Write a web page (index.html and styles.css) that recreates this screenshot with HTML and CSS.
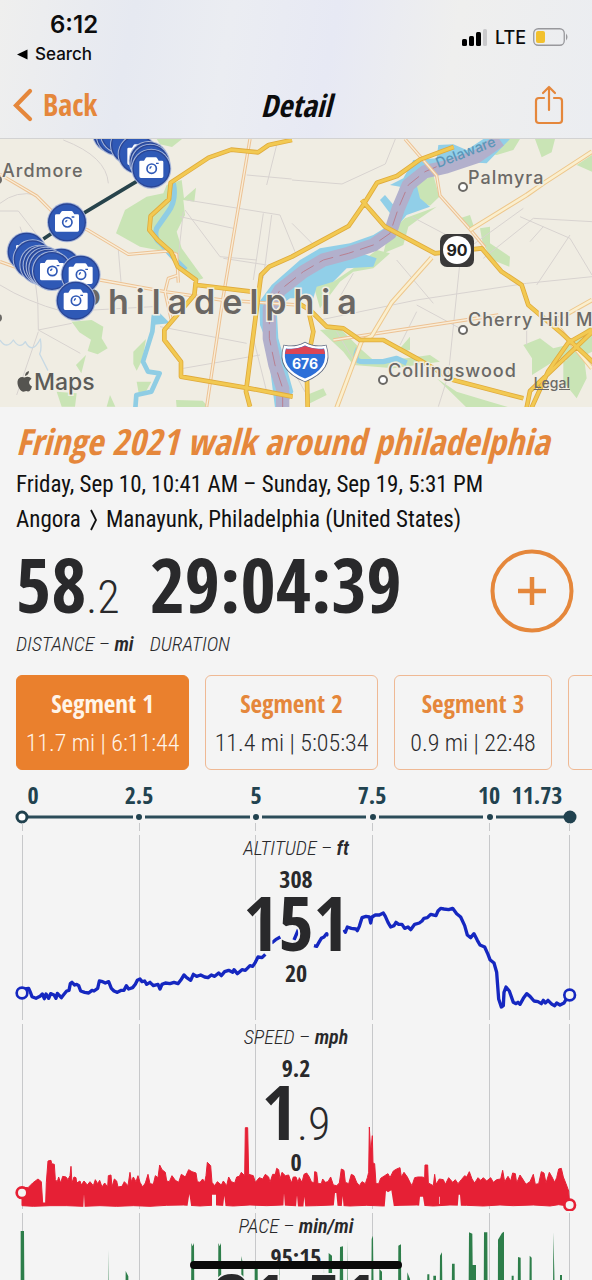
FILE: index.html
```html
<!DOCTYPE html>
<html lang="en">
<head>
<meta charset="utf-8">
<meta name="viewport" content="width=device-width, initial-scale=1">
<title>Detail</title>
<link rel="stylesheet" href="styles.css">
</head>
<body>
<div class="screen">
  <header class="top">
    <div class="status">
      <div class="status-left">
        <span class="time">6:12</span>
        <a class="return" href="#search"><svg width="11" height="11" viewBox="0 0 11 11" aria-hidden="true"><path d="M10.500 .5v10L0 5.500z"/></svg>Search</a>
      </div>
      <div class="status-right">
        <svg width="26" height="17" viewBox="0 0 26 17" aria-hidden="true"><rect y="10" width="5" height="7" rx="1.500"/><rect x="7" y="7" width="5" height="10" rx="1.500"/><rect x="14" y="3" width="5" height="14" rx="1.500"/><rect x="21" width="4" height="17" rx="1.500" fill="#c9c9cb"/></svg>
        <span class="net">LTE</span>
        <svg width="36" height="18" viewBox="0 0 36 18" aria-hidden="true"><rect x=".75" y=".75" width="30.500" height="16.500" rx="4.500" fill="none" stroke="#98989c" stroke-width="1.300"/><rect x="3" y="3" width="9" height="12" rx="2" fill="#f2c12e"/><path d="M33 5.500q3 3.500 0 7z" fill="#98989c"/></svg>
      </div>
    </div>
    <nav class="nav">
      <button class="back" type="button"><svg width="20" height="34" viewBox="0 0 20 34" aria-hidden="true"><path d="M17 3 3 17.500 17 31" fill="none" stroke="currentColor" stroke-width="4.200" stroke-linecap="round"/></svg>Back</button>
      <h1>Detail</h1>
      <button class="share" type="button" aria-label="Share"><svg width="32" height="40" viewBox="0 0 32 40" fill="none" stroke="currentColor" stroke-width="2.200" stroke-linecap="round" stroke-linejoin="round" aria-hidden="true"><path d="M11 13H6q-3 0-3 3v19q0 3 3 3h20q3 0 3-3V16q0-3-3-3h-5M16 25V2M10 8l6-6 6 6"/></svg></button>
    </nav>
  </header>

  <section class="map" aria-label="Route map">
    <svg viewBox="0 0 592 268" preserveAspectRatio="xMidYMid slice">
      <defs>
        <g id="pin">
          <circle r="60" fill="#a9b8da"/>
          <circle r="57" fill="#2a4594"/>
          <circle r="53" fill="#2f59b6"/>
        </g>
        <g id="cam">
          <path d="M-36-20q0-4 4-4h10l5-8q1-2 4-2h26q3 0 4 2l5 8h10q4 0 4 4v43q0 5-5 5h-62q-5 0-5-5z" fill="#fff"/>
          <circle cx="1" cy="0" r="14" fill="none" stroke="#2f59b6" stroke-width="5"/>
          <path d="M1-6a6 6 0 0 0-5 6M14-16h8" fill="none" stroke="#2f59b6" stroke-width="4"/>
        </g>
      </defs>
      <rect width="592" height="268" fill="#f0ede3"/>
      <g transform="translate(0 -4) scale(.33333)" fill="none" stroke-linejoin="round">
        <!-- parks -->
        <g fill="#c9e4b5">
          <path d="M500 150 545 135 552 190 588 158 583 200 550 195 555 240 530 290 545 340 610 430 590 437 540 395 500 350 420 335 348 295 375 225 440 185 490 175z"/>
          <path d="M470 12h76l-30 24-36-8z"/>
          <path d="M215 560l60-5 35 20-5 35 18 30-30 18-30-10 10-34-35-22zM228 690l30-30-14 55zM400 650l38-38-10 60-18 35-10-20zM410 740h44l-22 40-16-6zM170 770l60 5-5 40h-40zM320 815l10-35 16 35zM528 795l80 2 20 22h-98z"/>
          <path d="M1245 150 1300 120 1318 185 1290 212 1250 195zM1165 295 1215 250 1310 215 1260 250 1225 275 1210 330 1150 355zM1130 345 1170 355 1120 400 1060 410 1020 440 960 520 940 450 1000 440 1060 400zM1420 45 1460 12H1560L1540 45 1490 60zM1380 250 1410 240 1425 285 1400 280zM940 400 1030 360 1060 370 1010 400 930 440z"/>
          <path d="M960 585l60-5 60 60 40 35 100-5 70-10 30 20-140 20-120-10-30-40zM1200 640l30-35v40l-20 5zM1440 280l30-5 0 50 60 40-2 30-50-20-30-50zM1605 12l60 0-10 40-30 15zM1730 90l46-30v50zM1570 630l50-20 40 30 40-10 76-60v80l-60 30-40-10-80 50 0-50zM1690 680l60-30 10 80-30 60-40-50zM1310 730l60 40 100 30 60 18h-130zM920 780l50-20 10 20-50 25z"/>
        </g>
        <!-- local roads -->
        <g stroke="#d8d3d0" stroke-width="3">
          <path d="M0 205q50-40 110-25M190 15q130 50 135 130M0 228h55l62 80M60 275q60 140 55 310l126 70M115 585l100-20M115 590 50 780M355 345l8 95M560 195l280 45 45 110M540 245l160 35M555 225l105 140 110 10M740 120l135 12M830 30l-30 120M550 230l-20 180M790 235l-30 200M815 240l-25 190M480 575l260 50M550 700l230-40M0 450q80 50 190 80l270-15M670 370l130 20M760 610l40 160"/>
          <path d="M876 135l150 12 130-60 30-75M876 265l60 60M1235 245l190 100M1190 375l110 130M1060 415l-40 70M960 555l290-60 330-50 196-20M1380 380l-35 340-30 95M1250 530l-50 100M1390 350l180-130M1450 370l150-120 176 10M1560 245l150 65 66 110M1710 300l-100 150M1250 510l130 70M1010 590l60 100M1590 320l40-45M876 700l50 90M1580 560v70"/>
        </g>
        <!-- creeks and rivers -->
        <path d="M0 615q20 30 40 0 20 30 36 5 20 40 45-8 5 30-2 45l25 50" stroke="#c7d9e4" stroke-width="4"/>
        <path d="M520 145q10 50-15 85l-35 50q-10 30 12 45l45 50 30 30" stroke="#8fcde4" stroke-width="16"/>
        <path d="M462 540l-5 50-28 90 15 30 35 5-25 55-45 10-3 40" stroke="#8fcde4" stroke-width="14"/>
        <path d="M455 545l25-10 30 30-55 5z" fill="#8fcde4"/>
        <path d="M800 620 780 570 778 500 815 450 900 375 960 340 1050 325 1120 300 1160 275 1170 235 1140 195 1155 180 1185 215 1200 155 1170 150 1210 130 1240 75 1310 70 1315 30 1360 28 1400 45 1450 12H1530L1460 85 1380 80 1310 110 1250 150 1260 190 1290 215 1220 240 1170 300 1120 330 1070 350 1130 370 1120 395 1040 400 1000 440 950 455 940 490 870 490 830 520 835 610 880 770 855 818 825 818z" fill="#91cfe8"/>
        <path d="M1075 640q-20 40 15 40h60l40-10 30 14" stroke="#91cfe8" stroke-width="16"/>
        <path d="M848 818 848 760 825 690 808 610 808 520 840 465 910 410 970 375 1045 355 1120 330 1170 295 1195 220 1225 150 1275 110 1340 95 1430 65 1500 15" stroke="#b2b0cc" stroke-width="40"/>
        <path d="M848 818 848 760 825 690 808 610 808 520 840 465 910 410 970 375 1045 355 1120 330 1170 295 1195 220 1225 150 1275 110 1310 95" stroke="#b87f91" stroke-width="3" stroke-dasharray="44 20"/>
        <!-- secondary roads -->
        <path d="M0 118l110 65 65 65 90 38 120 72 115-10 30 10 5 85M0 380l70 25M300 435l195 35 170 25 230 15M495 470l10-40 30-10M495 470l20 90M750 12 668 495 620 815M1215 12l95 110 10 60 85 95 50 60M1000 615l495-75" stroke="#edc293" stroke-width="10"/>
        <path d="M0 118l110 65 65 65 90 38 120 72 115-10 30 10 5 85M0 380l70 25M300 435l195 35 170 25 230 15M495 470l10-40 30-10M495 470l20 90M750 12 668 495 620 815M1215 12l95 110 10 60 85 95 50 60M1000 615l495-75" stroke="#f8edd9" stroke-width="4"/>
        <path d="M1010 818l75-200 30-15 60-100 120-135M1410 285l170-105 50-35 146-95M1660 560l116-65M1660 560l116 140" stroke="#eec78c" stroke-width="14"/>
        <path d="M1010 818l75-200 30-15 60-100 120-135M1410 285l170-105 50-35 146-95M1660 560l116-65M1660 560l116 140" stroke="#faefcf" stroke-width="8"/>
        <!-- highways -->
        <path d="M876 15l-70 15-32 22-80-8-68 24-114 75-5 50-55 50-4 42 25 30 40 35 20 45 55 40-5 45-90 105 0 30 50 65 0 45 205 35 130 25M590 450l165 20M750 815l-12-45 45-350 25-25 68-30 170-92 45-65 40-65 60-20 70-50 100-37M1085 195l70 80 150 80 140-15 60 70 60 40 20 60 100 85 120 110M895 505l35 20 50 50 50 5 50 35 70 0 100 55 110 65 210 55M925 525l15 65-20 100 3 128M1595 818l50-110 60-85 71-40M1580 818l10-50 200-190" stroke="#e0ab3c" stroke-width="14"/>
        <path d="M876 15l-70 15-32 22-80-8-68 24-114 75-5 50-55 50-4 42 25 30 40 35 20 45 55 40-5 45-90 105 0 30 50 65 0 45 205 35 130 25M590 450l165 20M750 815l-12-45 45-350 25-25 68-30 170-92 45-65 40-65 60-20 70-50 100-37M1085 195l70 80 150 80 140-15 60 70 60 40 20 60 100 85 120 110M895 505l35 20 50 50 50 5 50 35 70 0 100 55 110 65 210 55M925 525l15 65-20 100 3 128M1595 818l50-110 60-85 71-40M1580 818l10-50 200-190" stroke="#f2c952" stroke-width="9"/>
        <path d="M130 312 205 262 425 130" stroke="#27434b" stroke-width="11"/>
      </g>
      <!-- place names -->
      <g class="place">
        <text x="2" y="38">Ardmore</text>
        <text x="468" y="45">Palmyra</text>
        <text x="468" y="187">Cherry Hill Mall</text>
        <text x="388" y="238">Collingswood</text>
        <g fill="#fff" stroke="#6b6966" stroke-width="2"><circle cx="463" cy="48" r="4"/><circle cx="463" cy="191" r="4"/><circle cx="383" cy="241" r="4"/></g>
        <circle cx="-2" cy="41" r="4"/><circle cx="-2" cy="179" r="4"/>
      </g>
      <text class="river" transform="translate(438 29) rotate(-21)">Delaware</text>
      <text class="city" x="79" y="175">Philadelphia</text>
      <!-- route shields -->
      <rect x="440" y="95" width="34" height="33" rx="7" fill="#3a3939"/><circle cx="457" cy="111" r="14" fill="#fff"/>
      <text class="shield dark" x="457" y="117">90</text>
      <path d="M285 208q11 2 20-3 9 5 20 3 7 22-20 33-27-11-20-33z" fill="#2d6fd8" stroke="#5d6880" stroke-width="4"/>
      <path d="M285 208q11 2 20-3 9 5 20 3 7 22-20 33-27-11-20-33z" fill="#2d6fd8" stroke="#fff" stroke-width="2.500"/>
      <path d="M286 210q10 1 19-3 9 4 19 3l1 5h-40z" fill="#dc4555"/>
      <text class="shield small" x="305" y="230">676</text>
      <!-- photo pins -->
      <g transform="translate(0 -4) scale(.33333)">
        <use href="#pin" x="336" y="-6"/><use href="#pin" x="348" y="2"/><use href="#pin" x="360" y="-4"/><use href="#pin" x="390" y="30"/><use href="#pin" x="413" y="58"/><use href="#cam" x="418" y="62"/>
        <use href="#pin" x="446" y="78"/><use href="#pin" x="451" y="86"/><use href="#pin" x="454" y="101"/><use href="#cam" x="454" y="101"/>
        <use href="#pin" x="201" y="262"/><use href="#cam" x="201" y="262"/>
        <use href="#pin" x="80" y="350"/><use href="#cam" x="84" y="354"/><use href="#pin" x="98" y="373"/><use href="#cam" x="104" y="378"/><use href="#pin" x="118" y="389"/><use href="#pin" x="128" y="391"/><use href="#pin" x="137" y="395"/><use href="#pin" x="184" y="398"/><use href="#pin" x="145" y="401"/><use href="#pin" x="156" y="408"/><use href="#cam" x="156" y="408"/>
        <use href="#pin" x="242" y="419"/><use href="#cam" x="242" y="419"/>
        <use href="#pin" x="227" y="497"/><use href="#cam" x="227" y="497"/>
      </g>
      <!-- Apple Maps mark -->
      <path d="M25 237q0-4 4-5 0 4-4 5zM32 247.500q-1.500 5-4 5-1.800-.8-3.500 0c-3.500 1.200-7.500-5-7-10 .5-4 4-5.500 7-4 3-1.500 5.500-.7 7 1.300-3.500 2.200-3 6 .5 7.700z" fill="#555450"/>
      <text class="brand" x="34" y="251">Maps</text>
    </svg>
    <a class="legal" href="#legal">Legal</a>
  </section>

  <main>
    <section class="summary">
      <h2>Fringe 2021 walk around philadelphia</h2>
      <p>Friday, Sep 10, 10:41 AM – Sunday, Sep 19, 5:31 PM</p>
      <p class="route">Angora <svg width="9" height="24" viewBox="0 0 9 24" aria-label="to"><path d="M2 2l5 10-5 10" fill="none" stroke="currentColor" stroke-width="1.800"/></svg> <span>Manayunk, Philadelphia (United States)</span></p>
      <div class="totals">
        <dl class="total"><dd>58<small>.2</small></dd><dt>DISTANCE – <b>mi</b></dt></dl>
        <dl class="total"><dd>29:04:39</dd><dt>DURATION</dt></dl>
        <button class="add" type="button" aria-label="Add"><svg viewBox="0 0 84 84" aria-hidden="true"><circle cx="42" cy="42" r="39.500" fill="none" stroke="currentColor" stroke-width="4"/><path d="M28 42h28M42 28v28" stroke="currentColor" stroke-width="4.500"/></svg></button>
      </div>
    </section>

    <div class="segments">
      <button class="segment active" type="button"><b>Segment 1</b><span>11.7 mi | 6:11:44</span></button>
      <button class="segment" type="button"><b>Segment 2</b><span>11.4 mi | 5:05:34</span></button>
      <button class="segment short" type="button"><b>Segment 3</b><span>0.9 mi | 22:48</span></button>
      <button class="segment" type="button" aria-label="Segment 4"></button>
    </div>

    <section class="charts">
      <svg class="scale" viewBox="0 0 592 54" aria-label="Distance in miles">
        <g class="scale-labels"><text x="33" y="25">0</text><text x="139" y="25">2.5</text><text x="256" y="25">5</text><text x="372" y="25">7.5</text><text x="489" y="25">10</text><text x="537" y="25">11.73</text></g>
        <path d="M22 38H133M145 38H250M262 38H366M379 38H483M496 38H570" stroke="#2b4c59" stroke-width="3"/>
        <circle cx="22" cy="38" r="5" fill="#fff" stroke="#21424f" stroke-width="3"/>
        <g fill="#21424f"><circle cx="139" cy="38" r="3"/><circle cx="256" cy="38" r="3"/><circle cx="373" cy="38" r="3"/><circle cx="490" cy="38" r="3"/><circle cx="570" cy="38" r="6.500"/></g>
        <path class="grid" d="M22.500 44v8M139.500 44v8M255.500 44v8M372.500 44v8M489.500 44v8M569.500 44v8"/>
      </svg>

      <div class="panel">
        <svg viewBox="0 0 592 189" aria-hidden="true">
          <path class="grid" d="M22.500 2v185M139.500 2v185M255.500 2v185M372.500 2v185M489.500 2v185M569.500 2v185"/>
          <g transform="translate(0 -4) scale(.33333)">
            <path fill="none" stroke="#1527c0" stroke-width="10" stroke-linejoin="round" d="M66 492 74 480 86 478 92 492 96 503 108 508 120 502 127 495 133 509 138 495 146 508 152 494 162 498 168 508 172 493 184 506 192 496 200 486 207 484 211 464 216 460 224 468 230 466 236 470 242 486 254 490 266 492 276 484 282 486 293 478 298 456 308 458 316 462 326 458 334 478 342 486 352 490 364 484 372 484 379 470 386 480 398 476 406 466 412 454 420 450 426 458 434 456 440 466 450 460 460 470 474 466 480 480 486 466 496 462 510 464 522 460 534 464 542 454 552 438 560 446 572 454 580 436 590 442 602 438 614 444 624 446 634 438 644 442 656 432 664 440 674 428 686 424 698 430 702 422 712 434 726 422 736 424 750 410 758 412 766 400 774 384 786 386 796 376M815 342 827 332 841 324M882 333 896 300M942 350 950 352 958 338 964 328 972 324 980 314 986 320M1032 302 1036 310 1042 294 1054 298 1068 300 1072 305 1078 292 1086 266 1098 262 1108 264 1112 282 1116 264 1126 258 1138 258 1150 252 1156 262 1164 280 1172 294 1182 290 1188 280 1196 286 1206 286 1214 298 1224 294 1232 302 1244 286 1258 282 1266 276 1272 268 1282 266 1292 256 1308 260 1314 246 1322 238 1332 240 1346 242 1358 238 1370 254 1382 264 1394 290 1402 318 1412 326 1422 314 1432 334 1440 348 1454 354 1464 376 1470 392 1482 402 1490 430 1496 510 1504 534 1510 530 1512 490 1518 474 1528 486 1540 520 1548 524 1554 520 1560 526 1570 508 1580 494 1590 502 1602 516 1614 518 1624 524 1630 514 1636 522 1644 514 1656 526 1664 530 1670 522 1680 528 1692 522 1700 508 1709 498"/>
            <g fill="#f4f4f4" stroke="#1527c0" stroke-width="8"><circle cx="66" cy="492" r="16"/><circle cx="1709" cy="498" r="16"/></g>
          </g>
        </svg>
        <div class="stat"><h3>ALTITUDE – <b>ft</b></h3><b class="limit">308</b><strong>151</strong><b class="limit">20</b></div>
      </div>

      <div class="panel">
        <svg viewBox="0 0 592 189" aria-hidden="true">
          <path class="grid" d="M22.500 2v185M139.500 2v185M255.500 2v185M372.500 2v185M489.500 2v185M569.500 2v185"/>
          <g transform="translate(0 -3) scale(.33333)">
            <path fill="#e62035" stroke="#e62035" stroke-width="3" stroke-linejoin="round" d="M66 505 84 506 98 492 114 480 124 488 128 552H137L139 490 144 426 153 424 155 434 163 436 166 482 172 488 176 474 182 492 188 472 198 474 204 482 210 470 213 442 216 492 222 474 228 476 230 492 240 486 244 498 252 486 262 498 270 488 280 500 286 482 293 494 299 484 306 504 314 492 323 504 325 470 333 468 336 504 343 480 350 486 354 504 366 502 373 488 384 500 390 460 394 488 400 474 408 488 414 470 420 490 428 504 436 492 444 466 450 494 460 496 466 470 474 476 479 438 486 452 496 460 500 486 508 488 516 470 526 484 536 490 544 466 556 474 566 452 576 458 588 462 592 488 600 490 608 480 614 490 618 470 622 430 632 440 636 490 644 500 652 488 664 498 670 486 680 500 686 474 694 488 704 492 710 474 718 472 724 460 734 470 736 326H743L746 466 760 470 766 490 778 476 788 480 796 466 806 474 810 490 818 466 826 466 830 448 836 452 840 480 846 460 856 470 866 468 874 492 880 474 888 474 894 490 898 476 906 490 912 466 920 462 928 474 934 488 942 492 944 458 950 460 954 494 964 494 968 480 976 490 984 488 992 474 1000 498 1010 500 1018 492 1024 450 1032 454 1036 490 1046 494 1054 466 1062 470 1070 490 1078 500 1086 488 1096 494 1102 476 1106 460 1108 324 1112 400 1117 350 1119 432 1124 434 1128 494 1136 494 1142 478 1154 470 1164 464 1170 476 1180 456 1190 450 1200 446 1204 474 1212 460 1222 474 1230 490 1236 500 1244 476 1254 474 1266 474 1274 476 1275 438H1283L1285 492 1300 500 1304 466 1308 496 1318 480 1330 482 1336 496 1346 476 1358 490 1366 482 1374 494 1384 482 1394 470 1400 474 1408 458 1416 480 1424 492 1434 476 1442 484 1450 476 1460 486 1472 476 1480 490 1490 482 1502 480 1508 454 1514 488 1524 472 1532 486 1538 462 1546 464 1550 492 1560 468 1568 480 1578 496 1590 488 1600 466 1606 496 1616 494 1624 458 1632 462 1638 492 1648 460 1656 474 1664 490 1670 476 1676 450 1684 448 1690 474 1698 494 1706 516 1709 558 1690 559 1676 557 1650 561 1600 558 1540 560 1500 558 1450 561 1400 559 1350 558 1300 561 1250 558 1200 559 1150 561 1100 559 1050 561 1000 558 950 560 900 561 850 558 800 560 750 558 700 561 650 558 600 561 550 558 500 559 450 562 400 560 350 562 300 560 250 562 200 560 150 560 100 562 66 560z"/>
            <g fill="#f4f4f4"><path d="M1154 565 1158 515 1164 520 1174 514 1182 565zM1257 565 1260 533h9l5 32zM562 565l6-40 6 40zM636 565v-38h12v38zM669 565l4-35 4 35zM910 565l3-32 3 32zM1001 565l4-43h4l4 43zM1025 565l3-34 3 34zM888 565l3-36 3 36zM850 565l2-42 3 42zM1373 565l3-38h4l3 38zM250 565l2-40 2 40zM1317 555v-22h2v22z"/></g>
            <g fill="#f4f4f4" stroke="#e62035" stroke-width="8"><circle cx="66" cy="521" r="16"/><circle cx="1709" cy="558" r="16"/></g>
          </g>
        </svg>
        <div class="stat"><h3>SPEED – <b>mph</b></h3><b class="limit">9.2</b><strong>1<small>.9</small></strong><b class="limit">0</b></div>
      </div>

      <div class="panel">
        <svg viewBox="0 0 592 189" aria-hidden="true">
          <path class="grid" d="M22.500 2v185M139.500 2v185M255.500 2v185M372.500 2v185M489.500 2v185M569.500 2v185"/>
          <g transform="translate(0 -192) scale(.33333)" fill="#2d7e4a">
            <path d="M62 1100V636h10l3 464zM322 1100l3-408 3 408zM374 1100l3-344 8 16 3 328zM572 1100l2-428 4 10 4-10 3 428zM653 1100l2-428 4 10 4-10 3 428zM724 1100v-389l6 30 3 359zM764 1100V740h9l2 360zM830 1100l8-380 2 380z"/>
            <path d="M969 1100l3-365 2 365zM984 1100l2-398 10 8 2 390zM1017 1100l3-416 9-2 2 418zM1040 1100l3-440 3 440zM1112 1100l3-440 4-10 5 450zM1138 1100V750l8 8 2 342zM1193 1100l2-420 8-4 2 424zM1218 1100l4-340 8 20v320zM1276 1100l6-334 6 0 2 334zM1317 1100l3-390 6-10 4 400zM1353 1100l3-366 8 0 2 366zM1300 1100v-330h8v330zM1404 1100l3-460 10 4 1 94 10 0v362zM1450 1100l2-460h10l2 460zM1493 1100l1-438 12-20 6-4 0 462zM1535 1100v-330h6v330zM1551 1100l3-386 8 2 2 384zM1586 1100l3-390 6 6 1 384zM1658 1100l2-460 3 120 5 340zM1680 1100v-332h6v332z"/>
          </g>
        </svg>
        <div class="stat"><h3>PACE – <b>min/mi</b></h3><b class="limit">95:15</b><strong>31:51</strong></div>
      </div>
    </section>
  </main>
  <div class="home-indicator"></div>
</div>
</body>
</html>
```
FILE: styles.css
```css
* { box-sizing: border-box; }

:root {
  --orange: #e5873b;
  --ink: #29292b;
  --paper: #f4f4f4;
  --regular: "Roboto Condensed", "Roboto", sans-serif;
  --bold: "Open Sans Condensed", "Open Sans", sans-serif;
  --system: Inter, "Liberation Sans", sans-serif;
}

body { margin: 0; background: var(--paper); color: #111; font-family: var(--regular); }
h1, h2, h3, p, dl, dd, dt { margin: 0; }
button { border: 0; padding: 0; background: none; color: var(--orange); font: inherit; cursor: pointer; }
svg { display: block; }
.screen { height: 100vh; overflow: hidden; }

/* Status bar and navigation */
.top {
  height: 139px;
  border-bottom: 1px solid #d2d2d2;
  background: linear-gradient(100deg, #efefee 0%, #e6e9f1 22%, #ebedf2 38%, #e7e9f4 55%, #efefee 75%, #ebedf1 100%);
  font-family: var(--system);
  color: #0c0c0d;
}
.status { display: flex; justify-content: space-between; height: 74px; padding: 10px 23px 0 17px; }
.status-left { display: flex; flex-direction: column; gap: 2px; }
.time { padding-left: 33px; font-size: 24px; line-height: 30px; font-weight: 600; }
.return { display: flex; align-items: center; gap: 7px; color: inherit; font-size: 17px; line-height: 24px; font-weight: 500; text-decoration: none; }
.status-right { display: flex; align-items: center; gap: 7px; height: 54px; }
.net { font-size: 18px; font-weight: 500; }
.nav { display: grid; grid-template-columns: 1fr auto 1fr; align-items: center; height: 62px; padding: 0 13px; }
.back { display: flex; align-items: center; gap: 10px; font: bold 30px/40px var(--bold); }
.nav h1 { font: italic bold 31px/40px var(--bold); }
.share { justify-self: end; margin-right: 14px; }

/* Map */
.map { position: relative; }
.map svg { width: 100%; }
.map text { font-family: var(--system); }
.place { font-size: 18px; font-weight: 500; fill: #6b6966; }
.place text, .city, .brand { stroke: #f0ede3; stroke-width: 3px; paint-order: stroke; letter-spacing: 1px; }
.city { font-size: 34px; font-weight: 600; fill: #6b6763; letter-spacing: 7px; }
.river { font-size: 14px; font-weight: 500; fill: #5b96b8; }
.shield { font-size: 16px; font-weight: 700; fill: #fff; text-anchor: middle; }
.shield.dark { fill: #222; }
.shield.small { font-size: 14px; }
.brand { font-size: 23px; font-weight: 500; fill: #5c5b58; letter-spacing: 0; }
.legal { position: absolute; right: 22px; bottom: 15px; color: #6b6966; font: 500 14px/18px var(--system); }

/* Summary */
.summary { padding: 10px 16px 0; }
.summary h2 { color: var(--orange); font: italic bold 36px/50px var(--bold); white-space: nowrap; }
.summary p { font-size: 23px; line-height: 35px; white-space: nowrap; }
.route { display: flex; align-items: center; gap: 8px; }
.totals { display: flex; align-items: flex-start; gap: 16px; padding-top: 8px; }
.total { display: flex; flex-direction: column; color: var(--ink); }
.total dd { height: 78px; font: bold 76px/78px var(--bold); white-space: nowrap; }
.total small, .stat small { font-family: var(--regular); font-size: 46px; line-height: 1; font-weight: 300; }
.total dt { padding-top: 6px; font-size: 20px; line-height: 30px; font-style: italic; font-weight: 300; white-space: nowrap; }
.total dt b, .stat h3 b { font-weight: 600; }
.add { width: 84px; margin: 4px 2px 0 auto; }

/* Segment tabs */
.segments { display: flex; gap: 16px; padding: 16px 0 0 16px; overflow: hidden; }
.segment {
  display: flex; flex: 0 0 173px; flex-direction: column; align-items: center; justify-content: center; gap: 8px;
  height: 95px; border: 1px solid #efb994; border-radius: 6px; white-space: nowrap;
}
.segment.short { flex-basis: 158px; }
.segment b { font: bold 25px/32px var(--bold); }
.segment span { color: var(--ink); font-size: 24px; line-height: 32px; font-weight: 300; }
.segment.active { border-color: #ea802d; background: #ea802d; }
.segment.active b, .segment.active span { color: #fff4e8; }

/* Charts */
.charts svg { width: 100%; }
.scale { margin-top: 9px; }
.scale-labels { fill: #21424f; font: bold 24px var(--bold); text-anchor: middle; }
.grid { fill: none; stroke: #c7c8ca; stroke-width: 1px; }
.panel { display: grid; }
.panel > * { grid-area: 1 / 1; }
.stat { display: flex; flex-direction: column; align-items: center; z-index: 1; color: var(--ink); }
.stat h3 { font-size: 20px; line-height: 30px; font-style: italic; font-weight: 300; }
.stat .limit { font: bold 24px/32px var(--bold); }
.stat strong { height: 62px; font: bold 76px/54px var(--bold); text-shadow: 2px 0 var(--paper), -2px 0 var(--paper), 0 2px var(--paper), 0 -2px var(--paper); }

.home-indicator { position: fixed; z-index: 2; bottom: 11px; left: 50%; width: 212px; height: 8px; margin-left: -106px; border-radius: 4px; background: #0a0a0a; }
```
